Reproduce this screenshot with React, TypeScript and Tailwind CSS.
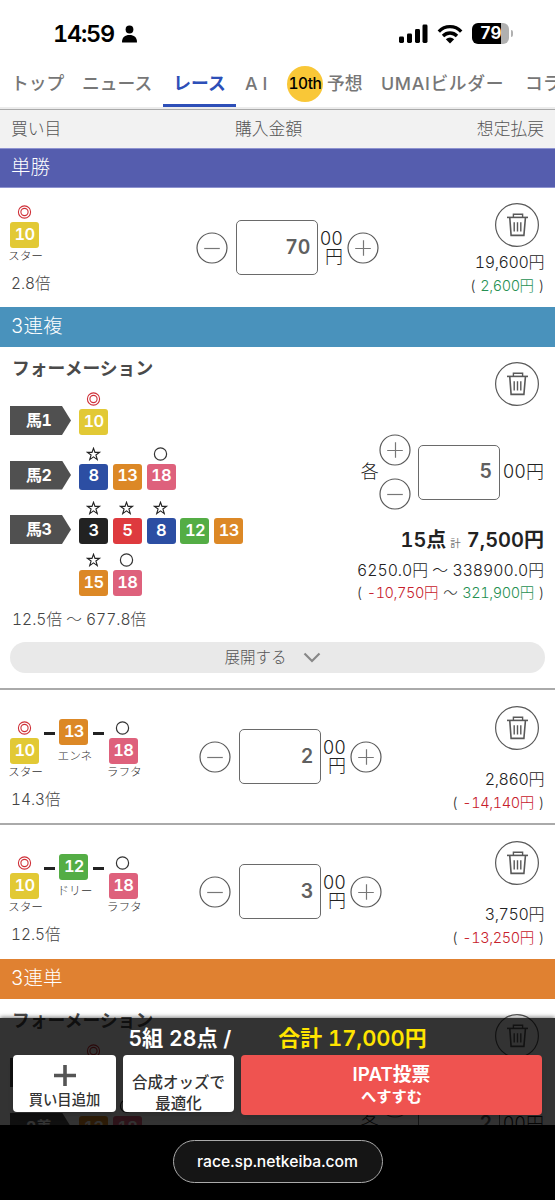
import type { ReactNode } from "react";
import clsx from "clsx";

type Mark = "double" | "circle" | "star";
type Horse = { no: number; mark?: Mark; name?: string };

const frameColors: Record<number, string> = {
  3: "bg-[#222222]",
  5: "bg-[#de3a3e]",
  8: "bg-[#2c4ea3]",
  10: "bg-[#e2c935]",
  12: "bg-[#54ad45]",
  13: "bg-[#dc8826]",
  15: "bg-[#dc8826]",
  18: "bg-[#de617c]",
};

const tabs = [
  { label: "トップ", className: "w-[71px]" },
  { label: "ニュース", className: "w-[81px]" },
];

function MarkIcon({ mark }: { mark?: Mark }) {
  return (
    <svg width="16" height="14" viewBox="0 0 16 14" fill="none" className="block">
      {mark === "double" && (
        <g stroke="#cf3038" strokeWidth="1.1">
          <circle cx="7.5" cy="7" r="6.1" />
          <circle cx="7.5" cy="7" r="3.6" />
        </g>
      )}
      {mark === "circle" && <circle cx="7.5" cy="7" r="6.1" stroke="#333" strokeWidth="1.2" />}
      {mark === "star" && (
        <path
          d="M7.5 1.2 9 5.4H13.5L9.9 8 11.3 12.6 7.5 9.9 3.7 12.6 5.1 8 1.5 5.4H6Z"
          stroke="#222"
          strokeWidth="1.1"
        />
      )}
    </svg>
  );
}

function HorseBadge({ no, mark, name }: Horse) {
  return (
    <div className="flex w-[29px] shrink-0 flex-col items-center">
      {(mark || !name) && (
        <div className="flex h-[17px] items-start">
          <MarkIcon mark={mark} />
        </div>
      )}
      <div
        className={clsx(
          "flex h-[26px] w-[29px] items-center justify-center rounded-[3px] pb-[2px] text-[16.5px] leading-none font-semibold tracking-[-0.7px] text-white",
          frameColors[no]
        )}
      >
        {no}
      </div>
      {name && (
        <span className={clsx("ml-[2px] text-[11.7px] leading-[16px] font-light whitespace-nowrap text-[#333]", !mark && "mt-[3px]")}>
          {name}
        </span>
      )}
    </div>
  );
}

function TrashButton() {
  return (
    <button className="block size-11 shrink-0">
      <svg width="44" height="44" viewBox="0 0 44 44" fill="none" stroke="#595959">
        <circle cx="22" cy="22" r="21.4" strokeWidth="1.2" />
        <path d="M18.4 14V11.2H27.6V14" strokeWidth="1.4" />
        <path d="M12 14.4H33" strokeWidth="1.6" />
        <path d="M14.8 15 16.1 32.4H28.9L30.4 15" strokeWidth="1.6" />
        <path d="M19.2 19.2V28.6M22.5 19.2V28.6M25.8 19.2V28.6" strokeWidth="1.4" />
      </svg>
    </button>
  );
}

function StepButton({ plus }: { plus?: boolean }) {
  return (
    <button className="block size-8 shrink-0">
      <svg width="32" height="32" viewBox="0 0 32 32" fill="none" stroke="#595959" strokeWidth="1.2">
        <circle cx="16" cy="16" r="15" />
        <path d={plus ? "M8.2 16.5H23.8M16.5 8.2V23.8" : "M8.2 16.5H23.8"} stroke="#777" />
      </svg>
    </button>
  );
}

function AmountBox({ value }: { value: number }) {
  return (
    <div className="flex h-[55px] w-[82px] shrink-0 items-center justify-end rounded-[5px] border border-[#6a6a6a] pr-[7px] text-[19.5px] font-semibold tracking-[-0.3px] text-[#606060]">
      {value}
    </div>
  );
}

function SectionBar({ title, className }: { title: string; className: string }) {
  return (
    <div className={clsx("flex h-10 shrink-0 items-center pl-[11px] text-[19.5px] leading-none font-light text-white", className)}>
      {title}
    </div>
  );
}

type BetProps = {
  horses: Horse[];
  odds: string;
  amount: number;
  payout: string;
  diff: string;
  className: string;
};

function BetRow({ horses, odds, amount, payout, diff, className }: BetProps) {
  const single = horses.length === 1;
  return (
    <div className={clsx("flex shrink-0 justify-between pr-[11px] pl-[10px]", className)}>
      <div className="flex w-[180px] flex-col">
        <div className="flex h-[60px] items-start gap-[4.7px]">
          {horses.map((horse, i) => (
            <div key={horse.no} className="flex items-start gap-[4.7px]">
              {i > 0 && <i className="mt-[11px] h-[3px] w-[11px] bg-[#222]" />}
              <div className={clsx(!horse.mark && "-mt-[2px]")}>
                <HorseBadge {...horse} />
              </div>
            </div>
          ))}
        </div>
        <p className="mt-[10px] pl-px text-[15.4px] leading-[18px] font-light text-[#444]">{odds}</p>
      </div>
      <div className={clsx("flex h-[55px] w-[190px] items-center", single ? "mt-[15px] -ml-[2px]" : "mt-[8px] ml-[4px]")}>
        <StepButton />
        <div className="ml-[8px] flex">
          <AmountBox value={amount} />
        </div>
        <div className="flex w-[25px] flex-col items-end text-[18px] leading-[18px] font-light text-[#222]">
          <span>00</span>
          <span>円</span>
        </div>
        <div className="ml-[4px]">
          <StepButton plus />
        </div>
      </div>
      <div className="flex w-[150px] flex-col items-end">
        <div className={clsx("mr-[5px]", single ? "-mt-[2px]" : "-mt-[15px]")}>
          <TrashButton />
        </div>
        <p className={clsx("text-[16px] leading-[24px] font-light tracking-[-0.4px] text-[#222]", single ? "mt-[3px]" : "mt-[17px]")}>
          {payout}
        </p>
        <Diff>
          <span className={diff.startsWith("-") ? "text-[#c7202b]" : "text-[#269052]"}>{diff}</span>
        </Diff>
      </div>
    </div>
  );
}

function Diff({ children }: { children: ReactNode }) {
  return (
    <p className="flex gap-[5px] text-[14.5px] leading-[24px] font-light tracking-[-0.4px] whitespace-nowrap text-[#333]">
      <span>(</span>
      {children}
      <span>)</span>
    </p>
  );
}

type FormationProps = {
  legs: { label: string; rows: Horse[][] }[];
  amount: number;
  children?: ReactNode;
};

function Formation({ legs, amount, children }: FormationProps) {
  return (
    <div className="flex h-[273px] shrink-0 pr-[11px] pl-[10px]">
      <div className="w-[265px]">
        <h2 className="pt-[9px] pl-[2px] text-[17.8px] leading-[26px] font-bold text-[#4a4a4a]">フォーメーション</h2>
        <div className="mt-[10px] flex flex-col gap-[11.5px]">
          {legs.map((leg) => (
            <div key={leg.label} className="flex gap-[8px]">
              <div className="mt-[14px] flex h-[29px] w-[61px] items-center bg-[#505050] pb-px pl-[16px] text-[16px] leading-none font-bold tracking-[-0.4px] text-white [clip-path:polygon(0_0,52px_0,100%_50%,52px_100%,0_100%)]">
                {leg.label}
              </div>
              <div className="flex flex-col gap-[9px]">
                {leg.rows.map((row, i) => (
                  <div key={i} className="flex gap-[4.8px]">
                    {row.map((horse) => (
                      <HorseBadge key={horse.no} {...horse} />
                    ))}
                  </div>
                ))}
              </div>
            </div>
          ))}
        </div>
      </div>
      <div className="flex flex-1 flex-col items-end">
        <div className="mt-[15px] mr-[5px]">
          <TrashButton />
        </div>
        <div className="mt-[28px] flex items-center text-[18px] leading-none font-light text-[#222]">
          <span>各</span>
          <div className="flex flex-col gap-[12px]">
            <StepButton plus />
            <StepButton />
          </div>
          <div className="ml-[7px]">
            <AmountBox value={amount} />
          </div>
          <span className="ml-[3px]">00円</span>
        </div>
        {children}
      </div>
    </div>
  );
}

function StatusBar() {
  return (
    <div className="flex h-[60px] shrink-0 items-center pt-[7px] pl-[53px]">
      <span className="w-[62px] text-[23.5px] font-semibold tracking-[-1.2px] text-black">14:59</span>
      <svg className="ml-[7px]" width="15" height="18" viewBox="0 0 15 18">
        <circle cx="7.5" cy="4.5" r="3.9" />
        <path d="M0 17C0 12.5 3 10 7.5 10S15 12.5 15 17Q15 17.5 14.5 17.5H.5Q0 17.5 0 17Z" />
      </svg>
      <svg className="ml-[262px]" width="29" height="20" viewBox="0 0 29 20">
        <rect x="0" y="12.5" width="5" height="6.5" rx="1.4" />
        <rect x="8" y="9.5" width="5" height="9.5" rx="1.4" />
        <rect x="16" y="5" width="5" height="14" rx="1.4" />
        <rect x="23.5" y="0.5" width="5" height="18.5" rx="1.4" />
      </svg>
      <svg className="ml-[9px]" width="26" height="20" viewBox="0 0 26 20" fill="none" stroke="#000" strokeWidth="3.3">
        <path d="M1.8 7.6C8 1 18 1 24.2 7.6" />
        <path d="M6 12C10 8 16 8 20 12" />
        <path d="M8.8 15.2Q13 11.6 17.2 15.2L13 19.4Z" fill="#000" stroke="none" />
      </svg>
      <div className="ml-[9px] flex h-[21px] w-[37px] items-center justify-center overflow-hidden rounded-[6px] bg-linear-to-r from-black from-78% to-[#b0b0b0] to-78% text-[17px] leading-none font-bold tracking-[-0.5px] text-white">
        79
      </div>
      <i className="ml-[2px] h-[7px] w-[2px] rounded-r-full bg-[#b0b0b0]" />
    </div>
  );
}

export default function App() {
  return (
    <div className="relative flex h-[1200px] w-[555px] flex-col overflow-hidden bg-white font-['Inter','Noto_Sans_CJK_JP',sans-serif] text-[#444] tabular-nums">
      <StatusBar />
      <nav className="flex h-[49px] shrink-0 items-stretch overflow-hidden border-b-2 border-[#ececec] pl-[11px] text-[17.8px] leading-[48px] font-medium whitespace-nowrap text-[#777]">
        {tabs.map((tab) => (
          <span key={tab.label} className={clsx("shrink-0", tab.className)}>{tab.label}</span>
        ))}
        <span className="w-[73px] shrink-0 border-b-3 border-[#2d4fb8] text-center font-bold text-[#2d4fb8]">レース</span>
        <span className="w-[51px] shrink-0 pl-[9px] tracking-[5px]">AI</span>
        <span className="mt-[6px] flex size-9 shrink-0 items-center justify-center rounded-full bg-[#f9c737] text-[15.5px] leading-none tracking-[-0.4px] text-black">
          10th
        </span>
        <span className="w-[58px] shrink-0 pl-[4px]">予想</span>
        <span className="w-[144px] shrink-0 tracking-[0.65px]">UMAIビルダー</span>
        <span className="shrink-0">コラム</span>
      </nav>
      <div className="flex h-[39px] shrink-0 items-center justify-between border-t border-[#aaa] bg-[#f2f2f2] pr-[11px] pl-[11px] text-[16.8px] leading-none font-light text-[#555]">
        <span>買い目</span>
        <span className="mr-px">購入金額</span>
        <span>想定払戻</span>
      </div>

      <SectionBar title="単勝" className="border-y border-[#8e93d0] bg-[#555dae]" />
      <BetRow
        horses={[{ no: 10, mark: "double", name: "スター" }]}
        odds="2.8倍"
        amount={70}
        payout="19,600円"
        diff="2,600円"
        className="h-[119px] pt-[17px]"
      />

      <SectionBar title="3連複" className="bg-[#4992bc]" />
      <Formation
        amount={5}
        legs={[
          { label: "馬1", rows: [[{ no: 10, mark: "double" }]] },
          { label: "馬2", rows: [[{ no: 8, mark: "star" }, { no: 13 }, { no: 18, mark: "circle" }]] },
          {
            label: "馬3",
            rows: [
              [{ no: 3, mark: "star" }, { no: 5, mark: "star" }, { no: 8, mark: "star" }, { no: 12 }, { no: 13 }],
              [{ no: 15, mark: "star" }, { no: 18, mark: "circle" }],
            ],
          },
        ]}
      >
        <p className="mt-[16px] flex items-baseline text-[20px] leading-[28px] font-semibold text-[#222]">
          15点<span className="mr-[6px] ml-[4px] text-[10.5px] font-normal text-[#777]">計</span>7,500円
        </p>
        <p className="mt-px text-[15.8px] leading-[24px] font-light whitespace-nowrap text-[#222]">6250.0円 ～ 338900.0円</p>
        <div className="-mt-[2px]">
          <Diff>
            <span className="text-[#c7202b]">-10,750円</span>
            <span>～</span>
            <span className="text-[#269052]">321,900円</span>
          </Diff>
        </div>
      </Formation>
      <div className="h-[70px] shrink-0 border-b-2 border-[#aaa] px-[10px]">
        <p className="-mt-[9px] h-[22px] pl-[2px] text-[15.6px] leading-[18px] font-light text-[#444]">12.5倍 ～ 677.8倍</p>
        <button className="mt-[9px] flex h-[31px] w-full items-center justify-center gap-4 rounded-full bg-[#e9e9e9] pr-[10px] text-[15.5px] leading-none font-light text-[#555]">
          展開する
          <svg width="18" height="12" viewBox="0 0 18 12" fill="none" stroke="#888" strokeWidth="2.2">
            <path d="M1.5 1.5 9 9 16.5 1.5" />
          </svg>
        </button>
      </div>

      <BetRow
        horses={[{ no: 10, mark: "double", name: "スター" }, { no: 13, name: "エンネ" }, { no: 18, mark: "circle", name: "ラフタ" }]}
        odds="14.3倍"
        amount={2}
        payout="2,860円"
        diff="-14,140円"
        className="h-[135px] border-b-2 border-[#aaa] pt-[31px]"
      />
      <BetRow
        horses={[{ no: 10, mark: "double", name: "スター" }, { no: 12, name: "ドリー" }, { no: 18, mark: "circle", name: "ラフタ" }]}
        odds="12.5倍"
        amount={3}
        payout="3,750円"
        diff="-13,250円"
        className="h-[134px] pt-[31px]"
      />

      <SectionBar title="3連単" className="bg-[#e08131]" />
      <Formation
        amount={2}
        legs={[
          { label: "1着", rows: [[{ no: 10, mark: "double" }]] },
          { label: "2着", rows: [[{ no: 13 }, { no: 18, mark: "circle" }]] },
        ]}
      />

      <footer className="absolute inset-x-0 bottom-0">
        <div className="h-[107px] bg-black/80 px-[13px] shadow-[0_-1px_4px_rgba(0,0,0,0.5)]">
          <div className="flex h-[37px] items-center justify-center gap-[47px] pt-[4px] leading-none font-semibold text-white">
            <span className="text-[21.2px]">5組 28点 /</span>
            <span className="text-[21.9px] text-[#ffe400]">合計 17,000円</span>
          </div>
          <div className="flex items-start gap-[7px] text-center text-[#333]">
            <button className="flex h-[57px] w-[103px] flex-col items-center rounded-[4px] bg-white pt-[10px] text-[14.3px] leading-[18px] font-medium shadow-md">
              <svg width="22" height="21" viewBox="0 0 22 21" stroke="#555" strokeWidth="3.6">
                <path d="M0 10.5H22M11 0V21" />
              </svg>
              <span className="mt-[5px]">買い目追加</span>
            </button>
            <button className="h-[57px] w-[111px] rounded-[4px] bg-white pt-[17px] text-[15.5px] leading-[21px] font-medium shadow-md">
              合成オッズで
              <br />
              最適化
            </button>
            <button className="h-[60px] w-[301px] rounded-[4px] bg-[#ef5350] text-white shadow-md">
              <span className="block text-[18.8px] leading-[23px] font-semibold">IPAT投票</span>
              <span className="block text-[15.3px] leading-[22px] font-bold">へすすむ</span>
            </button>
          </div>
        </div>
        <div className="flex h-[75px] justify-center bg-black pt-[15px]">
          <div className="flex h-[43px] w-[210px] items-center justify-center rounded-full border border-[#aaa] bg-[#151515] text-[15.7px] font-medium text-white">
            race.sp.netkeiba.com
          </div>
        </div>
      </footer>
    </div>
  );
}
